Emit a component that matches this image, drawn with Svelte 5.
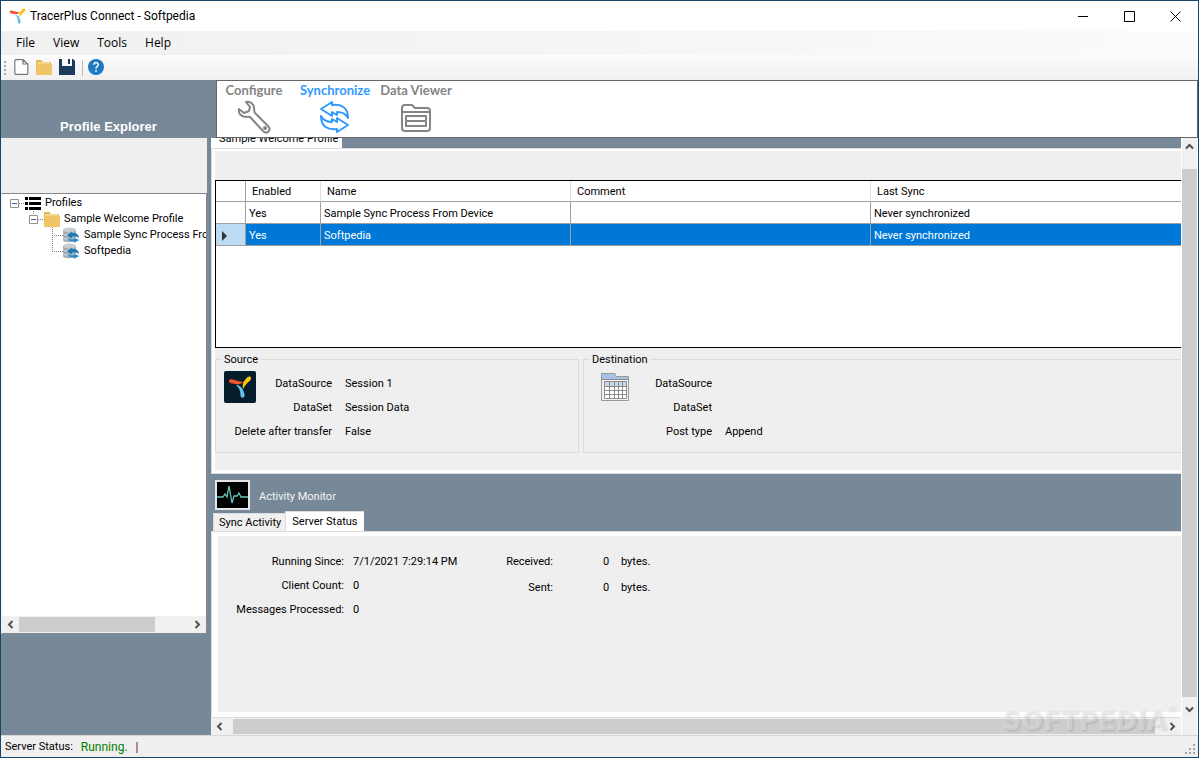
<script>
  const menus = ['File', 'View', 'Tools', 'Help'];

  const processes = [
    { enabled: 'Yes', name: 'Sample Sync Process From Device', comment: '', lastSync: 'Never synchronized' },
    { enabled: 'Yes', name: 'Softpedia', comment: '', lastSync: 'Never synchronized' },
  ];
  let selected = 1;

  const source = [
    ['DataSource', 'Session 1'],
    ['DataSet', 'Session Data'],
    ['Delete after transfer', 'False'],
  ];
  const destination = [
    ['DataSource', ''],
    ['DataSet', ''],
    ['Post type', 'Append'],
  ];
  const server = [
    ['Running Since:', '7/1/2021 7:29:14 PM'],
    ['Client Count:', '0'],
    ['Messages Processed:', '0'],
  ];
  const traffic = [
    ['Received:', '0'],
    ['Sent:', '0'],
  ];
</script>

{#snippet logo()}
  <path d="M1 5C1 2.500 4 3 6.500 4C9 5 11 5 15 6C13 8.500 10 8.500 7 8C4 7.500 1 7.500 1 5Z" fill="#f0532d" />
  <path d="M15 13C14.500 9 14.500 6 17 4C18.500 2 20 0 22 0.500C24 1.500 23 4 21 5.500C18.500 7.500 17 9.500 15 13Z" fill="#fcc30b" />
  <path d="M8 9C11 9 13.500 11 14.500 13C15.500 15 17.500 19 16 21C14.500 22.500 12.500 21.500 12.500 19C12.500 15 11.500 12 8 9Z" fill="#67c4ee" />
{/snippet}

{#snippet arrow(dir)}
  <svg class="arrow" width="9" height="9" viewBox="0 0 9 9">
    {#if dir === 'left'}
      <path d="M6.500 1L3 4.500L6.500 8" />
    {:else if dir === 'right'}
      <path d="M2.500 1L6 4.500L2.500 8" />
    {:else if dir === 'up'}
      <path d="M1 6.500L4.500 3L8 6.500" />
    {:else}
      <path d="M1 2.500L4.500 6L8 2.500" />
    {/if}
  </svg>
{/snippet}

{#snippet folder()}
  <svg width="16" height="16" viewBox="0 0 16 16">
    <path d="M0 1H5L7 3H15V15H0Z" fill="#e5b74f" />
    <path d="M1 4H14" stroke="#fff3cf" />
    <path d="M0 15L1 5H16V16H0Z" fill="#efc566" />
  </svg>
{/snippet}

{#snippet database()}
  <svg width="17" height="16" viewBox="0 0 17 16">
    <path d="M0 3V13C0 16 13 16 13 13V3Z" fill="#a3abaf" />
    <ellipse cx="6.500" cy="3" rx="6.500" ry="2.500" fill="#c6cccf" />
    <path d="M0 6.500C2 8.500 6 8.500 8 7.500M0 10.500C2 12.500 4 12.500 6 11.500" stroke="#dde2e4" fill="none" />
    <path d="M4 8.500L9 4.500V6C13 5.500 16 7.500 16 11C14 9.500 12 9 9 9.500V11.500Z" fill="#1c78b8" />
    <path d="M16.500 13L11 16V14.700C7 15 5 14 4 10.500C7 12 9 12.300 11 12V10.500Z" fill="#2b86c4" stroke="#e8eef2" stroke-width=".4" />
  </svg>
{/snippet}

{#snippet fields(rows)}
  <dl class="fields">
    {#each rows as [label, value]}
      <dt>{label}</dt>
      <dd>{value}</dd>
    {/each}
  </dl>
{/snippet}

<div class="window">
  <header class="titlebar">
    <svg width="17" height="16" viewBox="0 0 24 22">{@render logo()}</svg>
    <span class="title">TracerPlus Connect - Softpedia</span>
    <button aria-label="Minimize"><svg width="11" height="11"><path d="M0 5.500H10" /></svg></button>
    <button aria-label="Maximize"><svg width="11" height="11"><path d="M.5 .5H10.500V10.500H.5Z" /></svg></button>
    <button aria-label="Close"><svg width="11" height="11"><path d="M.5 .5L10.500 10.500M10.500 .5L.5 10.500" /></svg></button>
  </header>

  <nav class="menubar">
    {#each menus as menu}
      <button>{menu}</button>
    {/each}
  </nav>

  <div class="toolbar">
    <svg width="3" height="16" viewBox="0 0 3 16">
      <path d="M1 1V16" stroke="#aaa" stroke-width="2" stroke-dasharray="2 2" />
    </svg>
    <button aria-label="New">
      <svg width="15" height="16" viewBox="0 0 15 16">
        <path d="M.8 2Q.8 .7 2 .7H9L13.800 5V14Q13.800 15.300 12.500 15.300H2Q.8 15.300 .8 14ZM9 .7V5H13.800" fill="#fff" stroke="#777" stroke-width="1.200" />
      </svg>
    </button>
    <button aria-label="Open">{@render folder()}</button>
    <button aria-label="Save">
      <svg width="16" height="16" viewBox="0 0 16 16">
        <path d="M0 0H3V7H13V0H14L16 2V16H0Z" fill="#1b3a5c" />
        <path d="M9 0H11V5H9Z" fill="#1b3a5c" />
      </svg>
    </button>
    <span class="divider"></span>
    <button aria-label="Help">
      <svg width="16" height="16" viewBox="0 0 16 16">
        <circle cx="8" cy="8" r="8" fill="#1d79c2" />
        <path d="M5.800 5.800C5.800 2.800 10.500 3 10.300 5.800C10.200 7.500 8 7.500 8 9.700M8 11V12.700" fill="none" stroke="#fff" stroke-width="1.500" />
      </svg>
    </button>
  </div>

  <div class="band">
    <h2>Profile Explorer</h2>
    <div class="ribbon">
      <button>
        Configure
        <svg width="34" height="34" viewBox="0 0 34 34">
          <path d="M9 2C13 1 17 4 17 8C17 10 17 11 18 13L31 26C35 30 30 35 26 31L14 18C12 16 11 17 9 17C4 17 1 13 2 9L7 13L12 11L13 7Z" />
          <circle cx="28" cy="28" r="1" />
        </svg>
      </button>
      <button class="active">
        Synchronize
        <svg width="34" height="34" viewBox="0 0 34 34">
          <path d="M3 9L14 2V5C23 4 30 7 30 18C28 14 24 12 19 12V15L14 12V16Z" />
          <path d="M30 25L19 32V29C10 30 3 27 3 16C5 20 9 22 14 22V19L19 22V18Z" />
        </svg>
      </button>
      <button>
        Data Viewer
        <svg width="34" height="34" viewBox="0 0 34 34">
          <path d="M3 28V8Q3 5 6 5H13L16 8H28Q31 8 31 11V28Q31 31 28 31H6Q3 31 3 28ZM3 12H31M7 16H27V26H7ZM7 21H27" />
        </svg>
      </button>
    </div>
  </div>

  <div class="body">
    <aside>
      <div class="spacer"></div>
      <div class="tree">
        <ul>
          <li>
            <div class="row level0">
              <svg width="15" height="16"><path d="M9 8.500H15" class="dots" /><path d="M.5 4.500H8.500V12.500H.5Z" class="box" /><path d="M2 8.500H7" stroke="#3b5fae" /></svg>
              <svg width="16" height="16" viewBox="0 0 16 16">
                <path d="M0 3.500H3M4 3.500H16M0 8.500H3M4 8.500H16M0 13.500H3M4 13.500H16" stroke="#000" stroke-width="3" />
              </svg>
              <span>Profiles</span>
            </div>
            <ul>
              <li>
                <div class="row level1">
                  <svg width="15" height="16"><path d="M4.500 0V4M9 8.500H15" class="dots" /><path d="M.5 4.500H8.500V12.500H.5Z" class="box" /><path d="M2 8.500H7" stroke="#3b5fae" /></svg>
                  {@render folder()}
                  <span>Sample Welcome Profile</span>
                </div>
                <ul>
                  {#each processes as process, i}
                    <li class="row level2">
                      <svg width="11" height="16"><path d={i < processes.length - 1 ? 'M.5 0V16M0 8.500H11' : 'M.5 0V8M0 8.500H11'} class="dots" /></svg>
                      {@render database()}
                      <span>{process.name}</span>
                    </li>
                  {/each}
                </ul>
              </li>
            </ul>
          </li>
        </ul>
        <div class="scroll">
          <button aria-label="Scroll left">{@render arrow('left')}</button>
          <div class="track"><div class="thumb" style="width: 80%"></div></div>
          <button aria-label="Scroll right">{@render arrow('right')}</button>
        </div>
      </div>
    </aside>

    <main>
      <div class="view">
        <div class="profile-tabs"><button><span>Sample Welcome Profile</span></button></div>
        <section class="profile">
          <div class="grid">
            <table>
              <colgroup>
                <col class="c-mark" /><col class="c-enabled" /><col class="c-name" /><col class="c-comment" /><col />
              </colgroup>
              <thead>
                <tr><th></th><th>Enabled</th><th>Name</th><th>Comment</th><th>Last Sync</th></tr>
              </thead>
              <tbody>
                {#each processes as process, i}
                  <tr class:selected={i === selected} onclick={() => (selected = i)}>
                    <td class="mark">
                      {#if i === selected}
                        <svg width="6" height="10"><path d="M0 0L5 5L0 10Z" fill="#333" /></svg>
                      {/if}
                    </td>
                    <td>{process.enabled}</td>
                    <td>{process.name}</td>
                    <td>{process.comment}</td>
                    <td>{process.lastSync}</td>
                  </tr>
                {/each}
              </tbody>
            </table>
          </div>
          <div class="groups">
            <fieldset class="source">
              <legend>Source</legend>
              <svg width="32" height="32" viewBox="0 0 32 32">
                <rect width="32" height="32" rx="2" fill="#051c2b" />
                <g transform="translate(4 5)">{@render logo()}</g>
              </svg>
              {@render fields(source)}
            </fieldset>
            <fieldset class="destination">
              <legend>Destination</legend>
              <svg width="32" height="32" viewBox="0 0 32 32">
                <path d="M2.500 29.500V2.500H16L17 5.500H29.500V29.500Z" fill="#f4f4f4" stroke="#999" />
                <path d="M3 3H15.500L17 6H29V8H3Z" fill="#a5c3e4" />
                <rect x="5" y="11" width="22" height="5" fill="#c7d8ea" />
                <rect x="5" y="16" width="22" height="11" fill="#fff" />
                <path d="M5.500 10.500H27.500V27.500H5.500ZM5.500 15.500H27.500M5.500 19.500H27.500M5.500 23.500H27.500M10.500 10V28M15.500 10V28M19.500 10V28M23.500 10V28M3 8.500H29" fill="none" stroke="#8c8c8c" />
              </svg>
              {@render fields(destination)}
            </fieldset>
          </div>
        </section>

        <div class="monitor">
          <svg width="35" height="30" viewBox="0 0 35 30">
            <rect x="1" y="1" width="33" height="28" fill="#000" stroke="#e6e6e6" stroke-width="2" />
            <path d="M2 17H8L10 14L12 17L14 6L17 23L19 16H22L24 13L26 17H33" fill="none" stroke="#62c9bd" stroke-width="1.300" />
          </svg>
          <span>Activity Monitor</span>
        </div>
        <div class="status-tabs">
          <button>Sync Activity</button>
          <button class="current">Server Status</button>
        </div>
        <section class="server">
          <div class="page">
            {@render fields(server)}
            <dl class="fields traffic">
              {#each traffic as [label, value]}
                <dt>{label}</dt>
                <dd><span>{value}</span>bytes.</dd>
              {/each}
            </dl>
          </div>
        </section>
        <div class="scroll main-scroll">
          <button aria-label="Scroll left">{@render arrow('left')}</button>
          <div class="track"><div class="thumb" style="width: 99%"></div></div>
          <button aria-label="Scroll right">{@render arrow('right')}</button>
        </div>
      </div>
      <div class="scroll vertical">
        <button aria-label="Scroll up">{@render arrow('up')}</button>
        <div class="track"></div>
        <button aria-label="Scroll down">{@render arrow('down')}</button>
      </div>
    </main>
  </div>

  <footer>
    <span>Server Status:</span>
    <span class="running">Running.</span>
    <span class="caret">|</span>
    <svg width="11" height="11" viewBox="0 0 11 11">
      <path d="M8 0H10V2H8ZM4 4H6V6H4ZM8 4H10V6H8ZM0 8H2V10H0ZM4 8H6V10H4ZM8 8H10V10H8Z" fill="#a5a5a5" />
    </svg>
  </footer>

  <div class="watermark">SOFTPEDIA<sup>®</sup></div>
</div>

<style>
  :global(body) {
    margin: 0;
  }

  .window {
    position: relative;
    display: flex;
    flex-direction: column;
    box-sizing: border-box;
    min-height: 100vh;
    border: 1px solid #1b4566;
    background: #efefef;
    color: #000;
    font: 11px/16px Roboto, "Liberation Sans", sans-serif;
    overflow: hidden;
  }

  button {
    margin: 0;
    padding: 0;
    border: 0;
    background: none;
    color: inherit;
    font: inherit;
  }

  svg {
    display: block;
    flex: none;
  }

  ul, dl, dd, h2 {
    margin: 0;
    padding: 0;
    list-style: none;
  }

  /* title, menu, toolbar */
  .titlebar {
    display: flex;
    align-items: center;
    height: 30px;
    padding-left: 8px;
    background: #fff;
  }

  .titlebar .title {
    flex: 1;
    margin-left: 4px;
    font: 12px/16px Roboto, sans-serif;
  }

  .titlebar button {
    display: flex;
    justify-content: center;
    width: 46px;
  }

  .titlebar button path {
    fill: none;
    stroke: #000;
  }

  .menubar {
    display: flex;
    gap: 18px;
    height: 24px;
    padding-left: 15px;
    background: linear-gradient(90deg, #f0f0f0, #fbfbfb);
    font: 12px/24px "Open Sans", sans-serif;
  }

  .toolbar {
    display: flex;
    align-items: center;
    gap: 7px;
    height: 25px;
    padding-left: 3px;
    background: linear-gradient(#fcfcfc, #f0f0f0);
  }

  .toolbar button {
    padding-bottom: 1px;
  }

  .divider {
    width: 1px;
    height: 16px;
    margin-right: -2px;
    background: #bdbdbd;
  }

  .band {
    display: flex;
    background: #778899;
  }

  .band h2 {
    box-sizing: border-box;
    width: 215px;
    padding-top: 39px;
    color: #fff;
    font: bold 13px/16px "Liberation Sans", Arial, sans-serif;
    text-align: center;
  }

  .ribbon {
    display: flex;
    flex: 1;
    gap: 7px;
    box-sizing: border-box;
    height: 58px;
    border: 1px solid #666;
    background: #fff;
  }

  .ribbon button {
    display: flex;
    flex-direction: column;
    align-items: center;
    gap: 1px;
    width: 74px;
    color: #858585;
    font: bold 13px/18px Lato, sans-serif;
    white-space: nowrap;
  }

  .ribbon svg {
    fill: none;
    stroke: #858585;
    stroke-width: 2;
    stroke-linejoin: round;
  }

  .ribbon .active {
    color: #3399ff;
  }

  .ribbon .active svg {
    stroke: #3399ff;
  }

  .body {
    display: flex;
    flex: 1;
    background: #778899;
  }

  /* profile tree */
  aside {
    flex: none;
    display: flex;
    flex-direction: column;
    width: 206px;
    margin-right: 4px;
    padding-bottom: 101px;
  }

  .spacer {
    height: 55px;
    background: #efefef;
  }

  .tree {
    flex: 1;
    display: flex;
    flex-direction: column;
    border: 1px solid #828790;
    border-left-color: #efefef;
    background: #fff;
  }

  .tree > ul {
    flex: 1;
    padding-top: 1px;
    overflow: hidden;
  }

  .row {
    display: flex;
    align-items: center;
    height: 16px;
    white-space: nowrap;
  }

  .level0 {
    padding-left: 8px;
  }

  .level1 {
    padding-left: 27px;
  }

  .level2 {
    padding-left: 50px;
  }

  .row span {
    margin-left: 4px;
    line-height: 18px;
  }

  .dots {
    fill: none;
    stroke: #808080;
    stroke-dasharray: 1 1;
  }

  .box {
    fill: #fff;
    stroke: #919191;
  }

  .scroll {
    display: flex;
    height: 17px;
    background: #f0f0f0;
  }

  .scroll button {
    display: flex;
    align-items: center;
    justify-content: center;
    width: 17px;
    height: 17px;
  }

  .scroll .track {
    flex: 1;
  }

  .scroll .thumb {
    height: 15px;
    margin-top: 1px;
    background: #cdcdcd;
  }

  .arrow {
    fill: none;
    stroke: #505050;
    stroke-width: 2;
  }

  /* right side */
  main {
    flex: 1;
    display: flex;
    min-width: 0;
  }

  .view {
    flex: 1;
    display: flex;
    flex-direction: column;
    min-width: 0;
  }

  .profile-tabs {
    height: 10px;
    overflow: hidden;
  }

  .profile-tabs button {
    display: flex;
    align-items: flex-end;
    height: 10px;
    padding: 0 4px 0 8px;
    background: #fff;
    white-space: nowrap;
  }

  .profile-tabs span {
    line-height: 18px;
  }

  .profile {
    padding: 31px 0 20px 3px;
    border: 1px solid #dcdcdc;
    border-right: 0;
    background: #efefef;
    box-shadow: inset 3px 2px #fff, inset 0 -3px #fff;
  }

  .grid {
    height: 166px;
    border: 1px solid #000;
    border-right: 0;
    background: #fff;
  }

  table {
    width: 100%;
    border-collapse: separate;
    border-spacing: 0;
    table-layout: fixed;
  }

  .c-mark {
    width: 30px;
  }

  .c-enabled {
    width: 75px;
  }

  .c-name {
    width: 250px;
  }

  .c-comment {
    width: 300px;
  }

  th,
  td {
    box-sizing: border-box;
    height: 22px;
    padding: 2px 0 0 3px;
    border-right: 1px solid #a0a0a0;
    border-bottom: 1px solid #a0a0a0;
    text-align: left;
    font-weight: normal;
    line-height: 16px;
    white-space: nowrap;
  }

  th {
    height: 21px;
    padding-left: 6px;
    border-right-color: #dedede;
  }

  th:first-child {
    border-right-color: #a0a0a0;
  }

  th:last-child,
  td:last-child {
    border-right: 0;
  }

  .selected td {
    background: #0078d7;
    color: #fff;
  }

  .selected .mark {
    padding-left: 6px;
    background: #bcdcf4;
  }

  .groups {
    display: flex;
    gap: 4px;
    padding-top: 3px;
  }

  fieldset {
    display: flex;
    align-items: flex-start;
    box-sizing: border-box;
    height: 102px;
    margin: 0;
    padding: 4px 0 0 8px;
    border: 1px solid #dcdcdc;
  }

  legend {
    margin-left: -2px;
    padding: 1px 2px 0;
    line-height: 15px;
  }

  .source {
    width: 364px;
  }

  .destination {
    flex: 1;
    border-right: 0;
  }

  .destination > svg {
    margin-left: 7px;
  }

  .fields {
    display: grid;
    grid-template-columns: 76px auto;
    grid-auto-rows: 24px;
    column-gap: 13px;
    line-height: 26px;
    white-space: nowrap;
  }

  .fields dt {
    justify-self: end;
  }

  .destination .fields {
    grid-template-columns: 81px auto;
  }

  .monitor {
    display: flex;
    align-items: center;
    gap: 9px;
    padding: 6px 0 0 4px;
    color: #f4f4f4;
  }

  .monitor span {
    padding-top: 4px;
  }

  .status-tabs {
    display: flex;
    align-items: flex-end;
    height: 21px;
    padding-left: 2px;
  }

  .status-tabs button {
    height: 18px;
    padding: 1px 4px 0 5px;
    border: 1px solid #dcdcdc;
    border-width: 1px 0 0 1px;
    background: #f0f0f0;
  }

  .status-tabs .current {
    height: 20px;
    padding: 0 6px;
    background: #fff;
  }

  .server {
    flex: 1;
    display: flex;
    padding: 4px 0 5px 6px;
    border: 1px solid #dcdcdc;
    border-right: 0;
    background: #fff;
  }

  .page {
    flex: 1;
    display: flex;
    align-items: flex-start;
    padding-top: 13px;
    background: #efefef;
  }

  .page .fields {
    grid-template-columns: 126px 150px;
    column-gap: 9px;
  }

  .page .traffic {
    grid-template-columns: 50px auto;
    grid-auto-rows: 26px;
    column-gap: 50px;
  }

  .traffic span {
    display: inline-block;
    width: 18px;
  }

  .main-scroll .track {
    padding-left: 5px;
  }

  .vertical {
    flex-direction: column;
    width: 15px;
    height: auto;
    padding-bottom: 17px;
    border-left: 1px solid #fff;
    border-right: 1px solid #fff;
  }

  .vertical button {
    width: 15px;
  }

  .vertical .track {
    margin: 14px 0 4px;
    background: #cdcdcd;
  }

  footer {
    display: flex;
    align-items: center;
    height: 21px;
    padding: 0 2px 0 4px;
    border-top: 1px solid #d7d7d7;
    line-height: 18px;
  }

  .running {
    margin: 0 8px;
    color: #008000;
    font-size: 12px;
  }

  .caret {
    color: #800040;
    font-size: 12px;
  }

  footer svg {
    margin: 6px 0 0 auto;
  }

  .watermark {
    position: absolute;
    right: 22px;
    bottom: 20px;
    color: rgba(255, 255, 255, 0.4);
    font: bold 26px/32px "DejaVu Sans", sans-serif;
    text-shadow: 1px 1px 2px rgba(0, 0, 0, 0.15);
    pointer-events: none;
  }

  .watermark sup {
    font-size: 9px;
    line-height: 9px;
    vertical-align: top;
  }
</style>
